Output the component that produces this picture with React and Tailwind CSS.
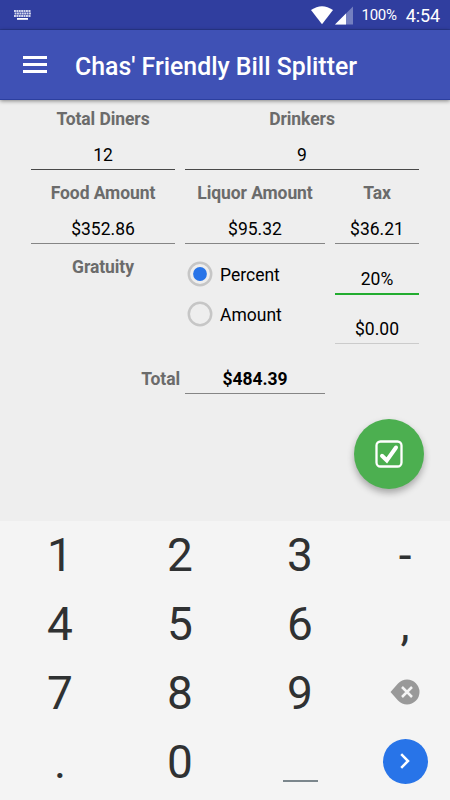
import React, { useState } from 'react';

const KEYS = [
  ['1', '2', '3', '-'],
  ['4', '5', '6', ','],
  ['7', '8', '9', 'delete'],
  ['.', '0', 'space', 'next'],
];

const StatusBar = () => (
  <div className="h-[30px] bg-[#303e9f] border-b border-[#29388f] flex items-center justify-between pl-[14px] pr-[10px] text-white">
    <svg width="17" height="10" viewBox="0 0 17 10" fill="none" stroke="#d3d7ee">
      <path d="M0 1h17M0.6 3.5h16.4M0 6h17" strokeWidth="1.9" strokeDasharray="1.9 0.5" />
      <path d="M3 8.9h11" stroke="#fff" strokeWidth="1.8" />
    </svg>
    <div className="flex items-center">
      <svg width="42" height="20" viewBox="0 0 42 20" className="mr-[9px]">
        <path d="M0 5Q11 -2.6 22 5L11 19.2Z" fill="#fff" />
        <path d="M42 1.5V19.5H24Z" fill="#747fc0" />
        <path d="M35 8.5V19.5H24Z" fill="#fff" />
      </svg>
      <span className="text-[15px] tracking-[-0.3px] mr-[9px] pt-px">100%</span>
      <span className="text-[18px] tracking-[-0.1px] pt-px">4:54</span>
    </div>
  </div>
);

const AppBar = () => (
  <header className="h-[70px] bg-[#3f51b5] border-b border-[#2c3f9f] shadow-[0_1px_4px_rgba(0,0,0,0.45)] flex items-center pl-[23px] text-white">
    <button className="w-6 flex flex-col gap-1">
      <span className="h-[3px] bg-white" />
      <span className="h-[3px] bg-white" />
      <span className="h-[3px] bg-white" />
    </button>
    <h1 className="ml-7 text-[24.85px] font-medium leading-[30px] pt-[4px]">Chas' Friendly Bill Splitter</h1>
  </header>
);

const Label = ({ children }) => (
  <div className="text-center tracking-[-0.08px] font-bold text-[#6b6b6b] leading-5">{children}</div>
);

const Field = ({ label, value, line = 'border-[#858585]', className = '' }) => (
  <div className={className}>
    <Label>{label}</Label>
    <div className={`mt-4 h-[25px] border-b text-center leading-5 ${line}`}>{value}</div>
  </div>
);

const Radio = ({ label, checked, onClick }) => (
  <button onClick={onClick} className="h-10 flex items-center text-left">
    <svg width="26" height="26" viewBox="0 0 26 26" className="ml-[2px] mr-[7px] mb-px">
      <circle cx="13" cy="13" r="11.2" fill="none" stroke="#c6c6c6" strokeWidth="2.5" />
      {checked && <circle cx="13" cy="13" r="6.9" fill="#2874e8" />}
    </svg>
    <span className="pt-[2px]">{label}</span>
  </button>
);

const Key = ({ value }) => {
  if (value === 'delete') {
    return (
      <svg width="30" height="26" viewBox="0 0 30 26" className="mb-px">
        <path d="M0.5 13L8 4.5Q12 0.5 17 0.5A12.5 12.5 0 0 1 17 25.5Q12 25.5 8 21.5Z" fill="#999" />
        <path d="M12 8L22 18M22 8L12 18" stroke="#f4f4f4" strokeWidth="2.5" />
      </svg>
    );
  }
  if (value === 'next') {
    return (
      <span className="size-[45px] mb-px rounded-full bg-[#2874e8] flex items-center justify-center">
        <svg width="10" height="16" viewBox="0 0 10 16" fill="none" stroke="#fff" strokeWidth="2.5">
          <path d="M1.2 1.2L8 8L1.2 14.8" />
        </svg>
      </span>
    );
  }
  if (value === 'space') return <span className="w-[35px] h-[2px] mt-[38px] bg-[#7b868c]" />;
  return <span className="leading-[54px]">{value}</span>;
};

const App = () => {
  const [mode, setMode] = useState('percent');

  return (
    <div className="w-[450px] h-[800px] overflow-hidden flex flex-col bg-[#eeeeee] font-[Roboto,sans-serif] text-black">
      <StatusBar />
      <AppBar />

      <main className="h-[421px] pl-[31px] pr-[31px] pt-[9px] text-[17.5px]">
        <div className="grid grid-cols-[144px_140px_84px] gap-x-[10px]">
          <Field label="Total Diners" value="12" line="border-[#484848]" className="h-[74px]" />
          <Field label="Drinkers" value="9" line="border-[#484848]" className="h-[74px] col-span-2" />
          <Field label="Food Amount" value="$352.86" className="h-[74px]" />
          <Field label="Liquor Amount" value="$95.32" className="h-[74px]" />
          <Field label="Tax" value="$36.21" className="h-[74px]" />

          {/* Gratuity */}
          <Label>Gratuity</Label>
          <div className="h-[115px] -mt-[3px] flex flex-col">
            <Radio label="Percent" checked={mode === 'percent'} onClick={() => setMode('percent')} />
            <Radio label="Amount" checked={mode === 'amount'} onClick={() => setMode('amount')} />
          </div>
          <div className="pt-3 text-center leading-5">
            <div className="h-[26px] border-b-2 border-[#22ac2f]">20%</div>
            <div className="mt-6 h-[25px] border-b border-[#cbcbcb]">$0.00</div>
          </div>

          {/* Total */}
          <div className="-mr-[5px] text-right tracking-[-0.1px] font-bold text-[#6b6b6b] leading-5">Total</div>
          <div className="h-[25px] border-b border-[#858585] text-center tracking-[-0.08px] font-bold leading-5">$484.39</div>
        </div>

        <div className="flex justify-end mt-[25px] -mr-[5px]">
          <button className="size-[70px] rounded-full bg-[#4caf50] shadow-[0_4px_7px_rgba(0,0,0,0.3)] flex items-center justify-center">
            <svg width="28" height="28" viewBox="0 0 28 28" fill="none" stroke="#fff">
              <rect x="1.5" y="1.5" width="25" height="25" rx="4" strokeWidth="2.3" />
              <path d="M7 15.8L11.8 20.5L21 7.5" strokeWidth="4" strokeLinecap="round" />
            </svg>
          </button>
        </div>
      </main>

      <div className="flex-1 bg-[#f4f4f4] text-[#2f3132] text-[46px]">
        {KEYS.map(row => (
          <div key={row[0]} className="h-[68.75px] grid grid-cols-[120px_120px_120px_90px]">
            {row.map(k => (
              <button key={k} className="flex items-center justify-center">
                <Key value={k} />
              </button>
            ))}
          </div>
        ))}
      </div>
    </div>
  );
};

export default App;
